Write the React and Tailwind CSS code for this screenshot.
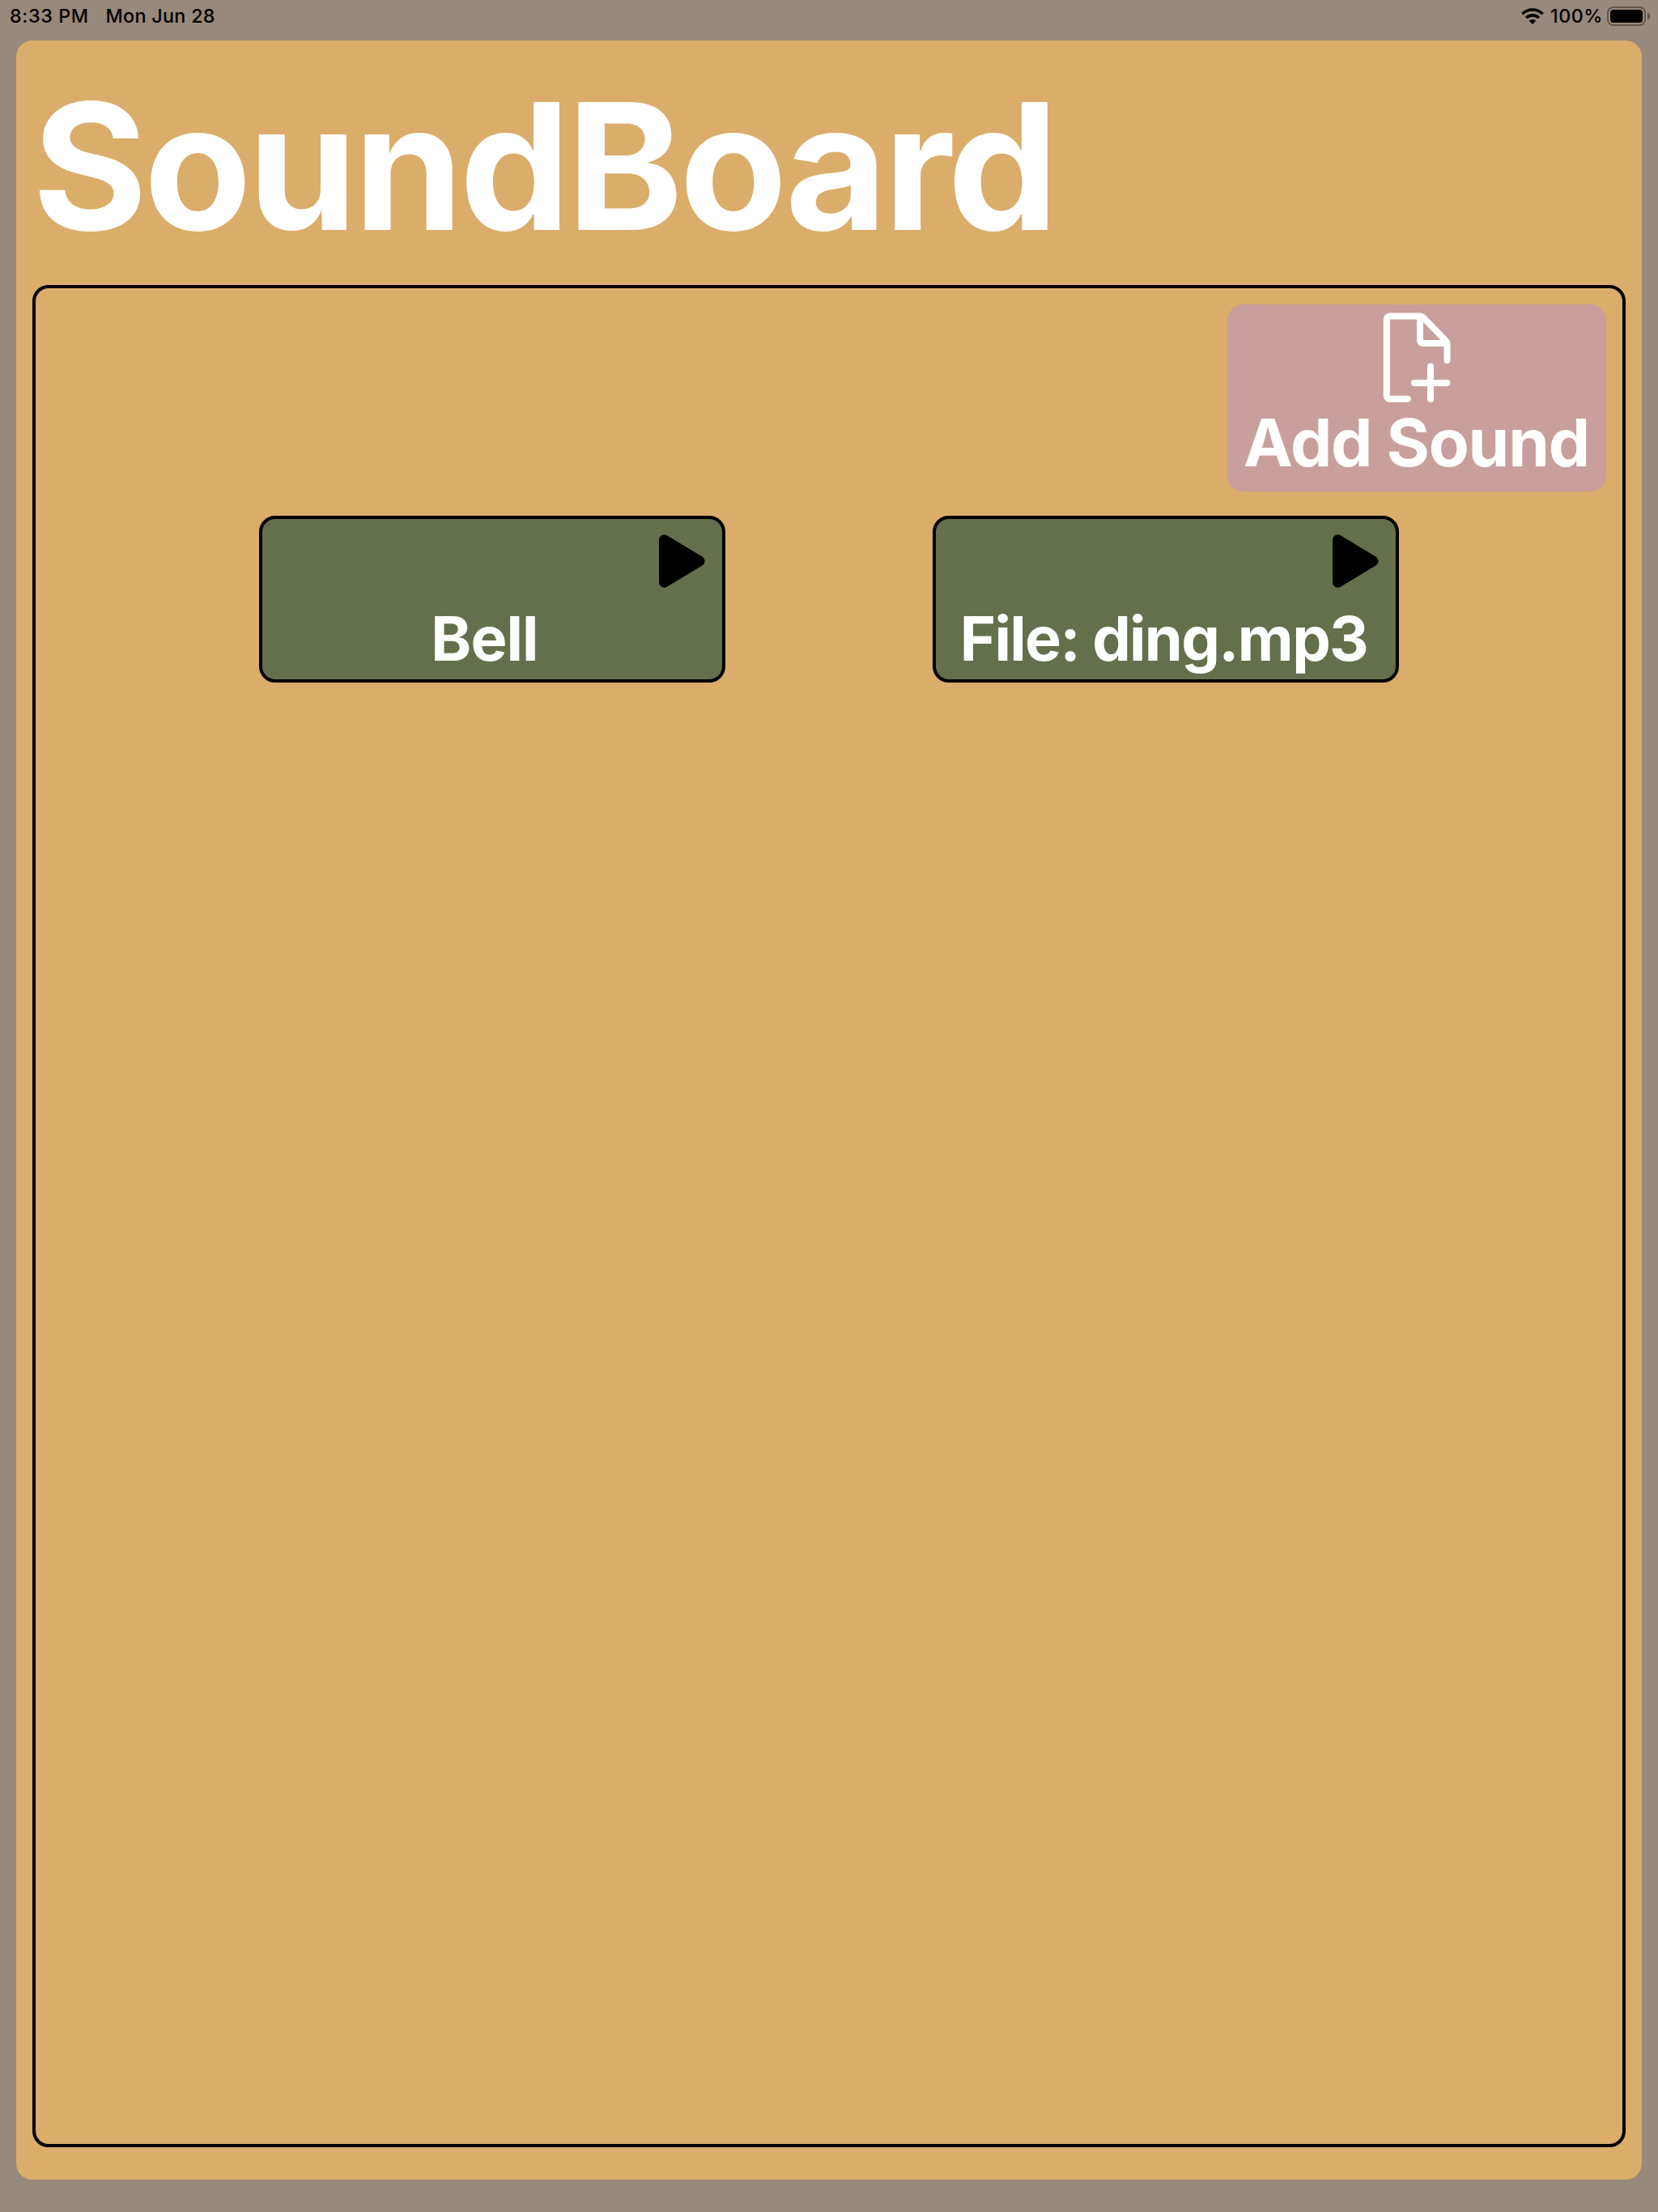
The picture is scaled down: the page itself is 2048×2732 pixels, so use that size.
const sounds = [
  { name: "Bell", label: "pr-[19px] tracking-[-0.9px]" },
  { name: "File: ding.mp3", label: "pr-[5px] tracking-[-1.7px]" },
];

function WifiIcon() {
  return (
    <svg className="h-[22px] w-[28px]" viewBox="0 0 28 22" fill="none" stroke="#000" strokeWidth="3.6">
      <path d="M1.4 8.2a18 18 0 0 1 25.2 0" />
      <path d="M6.2 13a11.2 11.2 0 0 1 15.6 0" />
      <path d="M14 21l-4.3-4.3a6.2 6.2 0 0 1 8.6 0z" fill="#000" stroke="none" />
    </svg>
  );
}

function BatteryIcon() {
  return (
    <div className="flex items-center gap-[2px]">
      <div className="h-[24px] w-[48px] rounded-[7.5px] border-2 border-[#5f564e] p-[2px]">
        <div className="h-full w-full rounded-[4px] bg-black" />
      </div>
      <div className="h-[8px] w-[3px] rounded-r-full bg-[#5f564e]" />
    </div>
  );
}

function FilePlusIcon() {
  return (
    <svg
      className="h-[111px] w-[84px]"
      viewBox="0 0 84 111"
      fill="none"
      stroke="#fff"
      strokeWidth="8"
      strokeLinecap="round"
      strokeLinejoin="round"
    >
      <path d="M30.8 106.8H9a4.2 4.2 0 0 1-4.2-4.2V8.6a4.2 4.2 0 0 1 4.2-4.2H46.6a4 4 0 0 1 3 1.3L78.3 35.3a4.2 4.2 0 0 1 1.2 3V59" />
      <path d="M46 5v29.3a3.8 3.8 0 0 0 3.8 3.8H79" />
      <path d="M59 66.4v40.4M39 87h40.5" />
    </svg>
  );
}

function PlayIcon() {
  return (
    <svg className="h-[66px] w-[57px]" viewBox="0 0 57 66">
      <path d="M6.5 6.8v52.4L50 33z" stroke="#000" strokeWidth="13" strokeLinejoin="round" />
    </svg>
  );
}

function SoundCard({ name, label }) {
  return (
    <button className="flex h-[206px] w-[576px] flex-col rounded-[20px] border-4 border-black bg-[#64704b]">
      <span className="mt-[19px] mr-[21px] self-end">
        <PlayIcon />
      </span>
      <span className={"mt-[18px] w-full text-center text-[75.6px] leading-[90px] font-bold whitespace-nowrap text-white " + label}>
        {name}
      </span>
    </button>
  );
}

export default function App() {
  return (
    <div className="flex h-[2732px] w-[2048px] flex-col bg-[#97897b] px-[20px] pb-[40px] font-['Inter',sans-serif]">
      <header className="-mx-[20px] flex h-[50px] items-start justify-between pr-[10px] pl-[12px] text-[23.3px] leading-[40px] font-medium text-black">
        <div className="flex gap-[21px]">
          <span className="tracking-[0.6px]">8:33 PM</span>
          <span className="tracking-[0.3px]">Mon Jun 28</span>
        </div>
        <div className="flex h-[40px] items-center">
          <WifiIcon />
          <span className="mr-[5px] ml-[8px] tracking-[0.5px]">100%</span>
          <BatteryIcon />
        </div>
      </header>
      <main className="flex flex-1 flex-col rounded-[20px] bg-[#daad6b] px-[20px] pb-[40px]">
        <h1 className="h-[302px] pt-[20px] text-[217px] leading-[270px] font-bold tracking-[-4.4px] whitespace-nowrap text-white">
          SoundBoard
        </h1>
        <section className="flex flex-1 flex-col rounded-[20px] border-4 border-black p-[20px]">
          <button className="flex h-[231px] w-[468px] flex-col items-center self-end rounded-[20px] bg-[#c89f9c] pt-[10px]">
            <FilePlusIcon />
            <span className="pr-[1px] text-[81.6px] leading-[100px] font-bold tracking-[-1.2px] whitespace-nowrap text-white">Add Sound</span>
          </button>
          <div className="mt-[30px] flex justify-evenly">
            {sounds.map((s) => (
              <SoundCard key={s.name} name={s.name} label={s.label} />
            ))}
          </div>
        </section>
      </main>
    </div>
  );
}
